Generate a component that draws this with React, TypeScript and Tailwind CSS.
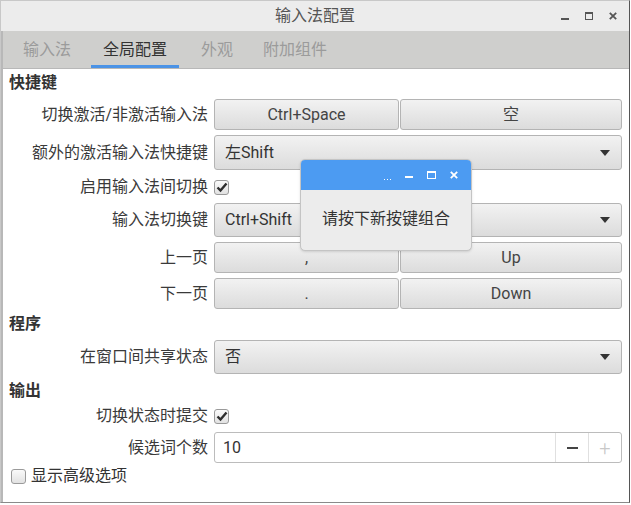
import React from "react";

const font = { fontFamily: "Roboto, 'Noto Sans CJK SC', sans-serif" };

function Arrow() {
  return (
    <svg width="10" height="6" viewBox="0 0 10 6" className="ml-auto">
      <path d="M0 0 L10 0 L5 6 Z" fill="#333" />
    </svg>
  );
}

function Check({ on }: { on: boolean }) {
  return (
    <div className="w-[15px] h-[15px] rounded-[3px] border border-[#9a9a9a] bg-gradient-to-b from-[#fafafa] to-[#e2e2e2] flex items-center justify-center">
      {on && (
        <svg width="12" height="11" viewBox="0 0 12 11">
          <path d="M1.5 5.5 L4.5 8.5 L10.5 1.5" stroke="#2e2e2e" strokeWidth="2.4" fill="none" />
        </svg>
      )}
    </div>
  );
}

const btn =
  "flex items-center justify-center rounded-[3px] border border-[#b4b4b4] bg-gradient-to-b from-[#f2f2f2] to-[#dcdcdc] text-[#444]";
const combo =
  "flex items-center rounded-[3px] border border-[#b4b4b4] bg-gradient-to-b from-[#f2f2f2] to-[#dcdcdc] text-[#333] pl-[10px] pr-[11px]";

function Row({ label, h, children }: { label: string; h: string; children: React.ReactNode }) {
  return (
    <div className={`flex items-center ${h}`}>
      <div className="w-[205px] text-right text-[#3a3a3a] shrink-0 whitespace-nowrap">{label}</div>
      <div className="ml-[6px] flex-1 h-full flex">{children}</div>
    </div>
  );
}

export default function App() {
  return (
    <div className="w-[631px] h-[505px] bg-white relative text-[16px]" style={font}>
      <div className="w-[630px] h-[503px] border border-[#c8c8c8] border-r-[#555] border-b-[#8a8a8a] flex flex-col bg-[#ececec]">
        {/* title bar */}
        <div className="h-[30px] flex items-center relative shrink-0">
          <div className="absolute inset-0 flex items-center justify-center text-[#555]">输入法配置</div>
          <div className="ml-auto flex items-center gap-[16px] pr-[12px] relative">
            <div className="w-[8px] h-[2px] bg-[#555] mt-[6px]" />
            <div className="w-[8px] h-[8px] border-[1.5px] border-[#555] border-t-2" />
            <svg width="8" height="8" viewBox="0 0 8 8">
              <path d="M0.8 0.8 L7.2 7.2 M7.2 0.8 L0.8 7.2" stroke="#555" strokeWidth="1.8" />
            </svg>
          </div>
        </div>
        <div className="flex-1 flex flex-col border-l-2 border-[#b8b8b8] bg-white">
          {/* tabs */}
          <div className="h-[38px] bg-[#cfcfcd] border-b border-[#b8b8b8] flex items-end shrink-0">
            <div className="w-[88px] h-full flex items-center justify-center text-[#9b9b9b]">输入法</div>
            <div className="h-full flex items-center text-[#333] border-b-[3px] border-[#4b93e6] pt-[3px] w-[88px] justify-center">全局配置</div>
            <div className="w-[76px] h-full flex items-center justify-center text-[#9b9b9b]">外观</div>
            <div className="pl-[8px] h-full flex items-center text-[#9b9b9b]">附加组件</div>
          </div>
          <div className="flex flex-col pr-[7px]">
            <div className="h-[27px] flex items-center pl-[6px] pt-[1px] font-bold text-[#333]">快捷键</div>
            <div className="mt-[3px]">
              <Row label="切换激活/非激活输入法" h="h-[31px]">
                <div className={`${btn} w-[185px]`}>Ctrl+Space</div>
                <div className={`${btn} flex-1 ml-[1px]`}>空</div>
              </Row>
            </div>
            <div className="mt-[5px]">
              <Row label="额外的激活输入法快捷键" h="h-[35px]">
                <div className={`${combo} flex-1`}>
                  左Shift
                  <Arrow />
                </div>
              </Row>
            </div>
            <div className="mt-[5px]">
              <Row label="启用输入法间切换" h="h-[24px]">
                <div className="flex items-center">
                  <Check on />
                </div>
              </Row>
            </div>
            <div className="mt-[4px]">
              <Row label="输入法切换键" h="h-[34px]">
                <div className={`${combo} flex-1`}>
                  Ctrl+Shift
                  <Arrow />
                </div>
              </Row>
            </div>
            <div className="mt-[5px]">
              <Row label="上一页" h="h-[31px]">
                <div className={`${btn} w-[185px]`}>,</div>
                <div className={`${btn} flex-1 ml-[1px]`}>Up</div>
              </Row>
            </div>
            <div className="mt-[5px]">
              <Row label="下一页" h="h-[31px]">
                <div className={`${btn} w-[185px]`}>.</div>
                <div className={`${btn} flex-1 ml-[1px]`}>Down</div>
              </Row>
            </div>
            <div className="h-[26px] mt-[2px] flex items-center pl-[6px] font-bold text-[#333]">程序</div>
            <div className="mt-[3px]">
              <Row label="在窗口间共享状态" h="h-[34px]">
                <div className={`${combo} flex-1`}>
                  否
                  <Arrow />
                </div>
              </Row>
            </div>
            <div className="h-[26px] mt-[4px] flex items-center pl-[6px] font-bold text-[#333]">输出</div>
            <Row label="切换状态时提交" h="h-[24px]">
              <div className="flex items-center">
                <Check on />
              </div>
            </Row>
            <div className="mt-[4px]">
              <Row label="候选词个数" h="h-[31px]">
                <div className="flex-1 flex rounded-[3px] border border-[#bcbcbc] bg-white">
                  <div className="flex-1 flex items-center pl-[8px] text-[#333]">10</div>
                  <div className="w-[33px] border-l border-[#e0e0e0] flex items-center justify-center">
                    <div className="w-[11px] h-[2px] bg-[#444]" />
                  </div>
                  <div className="w-[33px] border-l border-[#e0e0e0] flex items-center justify-center text-[#c8c8c8] text-[20px] font-light">
                    +
                  </div>
                </div>
              </Row>
            </div>
            <div className="h-[22px] mt-[2px] flex items-center pl-[8px] gap-[5px] text-[#333]">
              <Check on={false} />
              显示高级选项
            </div>
          </div>
        </div>
      </div>

      {/* key capture popup */}
      <div className="absolute left-[300px] top-[159px] w-[172px] h-[92px] rounded-[5px] border border-[#c4c4c4] bg-[#ececec] overflow-hidden flex flex-col shadow-sm">
        <div className="h-[30px] bg-[#4c9bf2] flex items-center justify-end pr-[13px] gap-[14px] shrink-0">
          <div className="flex gap-[2px] mt-[9px]">
            <div className="w-[1px] h-[1px] bg-white" />
            <div className="w-[1px] h-[1px] bg-white" />
            <div className="w-[1px] h-[1px] bg-white" />
          </div>
          <div className="w-[8px] h-[2px] bg-white mt-[4px]" />
          <div className="w-[9px] h-[8px] border-[1.5px] border-white border-t-2" />
          <svg width="8" height="8" viewBox="0 0 8 8">
            <path d="M0.8 0.8 L7.2 7.2 M7.2 0.8 L0.8 7.2" stroke="#fff" strokeWidth="1.8" />
          </svg>
        </div>
        <div className="flex-1 flex items-center justify-center text-[#333] pb-[3px]">请按下新按键组合</div>
      </div>
    </div>
  );
}
